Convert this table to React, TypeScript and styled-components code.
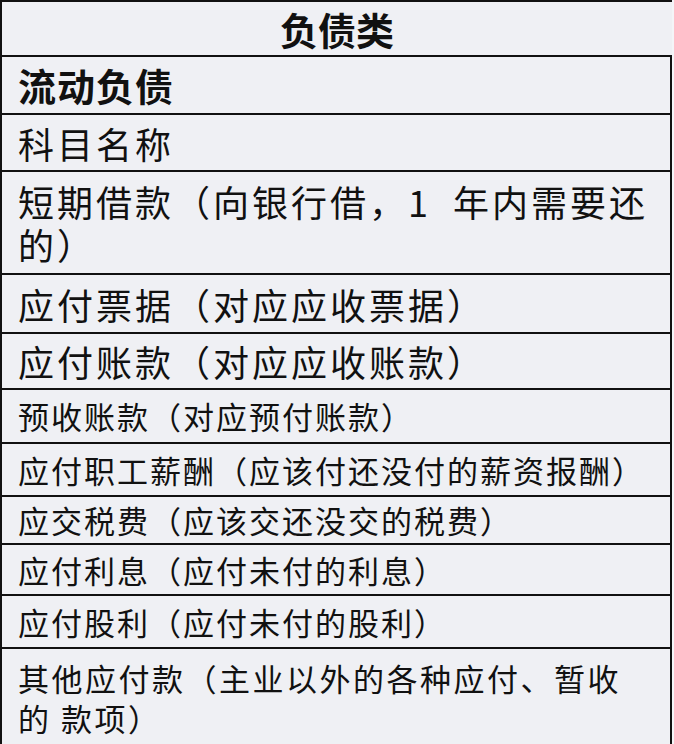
import React from "react";
import styled, { createGlobalStyle } from "styled-components";

const GlobalStyle = createGlobalStyle`
  html, body {
    margin: 0;
    padding: 0;
    background: #f4f5f8;
  }
  body {
    font-family: "Noto Sans CJK SC", "Noto Sans", sans-serif;
    color: #111;
  }
`;

const Table = styled.div`
  width: 672px;
  display: flex;
  flex-direction: column;
  background: #eff0f4;
`;

const TitleRow = styled.div<{ $h: number }>`
  box-sizing: border-box;
  height: ${(p) => p.$h}px;
  border-top: 2px solid #111;
  border-left: 2px solid #111;
  display: flex;
  align-items: center;
  justify-content: center;
  font-size: 38px;
  font-weight: 700;
  line-height: 1;
`;

const Row = styled.div<{ $h: number }>`
  box-sizing: border-box;
  height: ${(p) => p.$h}px;
  border-top: 2px solid #111;
  border-left: 2px solid #111;
  border-right: 2px solid #111;
  padding-left: 16px;
  display: flex;
  align-items: center;
`;

const Cell = styled.div<{ $size: number; $track: number; $lh: number; $bold?: boolean }>`
  display: flex;
  flex-direction: column;
  font-size: ${(p) => p.$size}px;
  letter-spacing: ${(p) => p.$track}px;
  line-height: ${(p) => p.$lh}px;
  font-weight: ${(p) => (p.$bold ? 700 : 400)};
  white-space: pre;
`;

const Line = styled.span`
  display: block;
`;

type RowData = {
  lines: string[];
  h: number;
  size: number;
  track: number;
  lh?: number;
  bold?: boolean;
};

const rows: RowData[] = [
  { lines: ["流动负债"], h: 58, size: 38, track: 1, bold: true },
  { lines: ["科目名称"], h: 57, size: 36, track: 3 },
  { lines: ["短期借款（向银行借，1  年内需要还", "的）"], h: 103, size: 36, track: 3, lh: 43 },
  { lines: ["应付票据（对应应收票据）"], h: 59, size: 36, track: 3 },
  { lines: ["应付账款（对应应收账款）"], h: 56, size: 36, track: 3 },
  { lines: ["预收账款（对应预付账款）"], h: 54, size: 31, track: 2 },
  { lines: ["应付职工薪酬（应该付还没付的薪资报酬）"], h: 53, size: 31, track: 2 },
  { lines: ["应交税费（应该交还没交的税费）"], h: 48, size: 31, track: 2 },
  { lines: ["应付利息（应付未付的利息）"], h: 51, size: 31, track: 2 },
  { lines: ["应付股利（应付未付的股利）"], h: 53, size: 31, track: 2 },
  { lines: ["其他应付款（主业以外的各种应付、暂收", "的 款项）"], h: 100, size: 31, track: 2.5, lh: 40 },
];

export default function App() {
  return (
    <>
      <GlobalStyle />
      <Table>
        <TitleRow $h={55}>负债类</TitleRow>
        {rows.map((r, i) => (
          <Row key={i} $h={r.h}>
            <Cell $size={r.size} $track={r.track} $lh={r.lh ?? 44} $bold={r.bold}>
              {r.lines.map((l, j) => (
                <Line key={j}>{l}</Line>
              ))}
            </Cell>
          </Row>
        ))}
      </Table>
    </>
  );
}
